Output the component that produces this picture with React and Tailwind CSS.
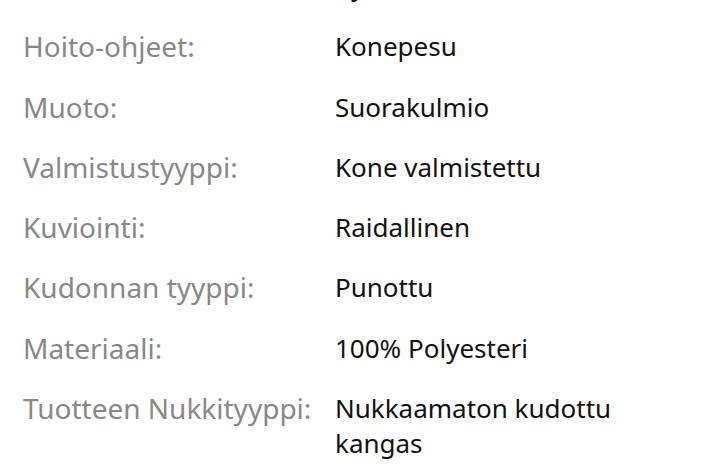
import React from 'react';

const rows = [
  ['Hoito-ohjeet:', 'Konepesu'],
  ['Muoto:', 'Suorakulmio'],
  ['Valmistustyyppi:', 'Kone valmistettu'],
  ['Kuviointi:', 'Raidallinen'],
  ['Kudonnan tyyppi:', 'Punottu'],
  ['Materiaali:', '100% Polyesteri'],
  ['Tuotteen Nukkityyppi:', 'Nukkaamaton kudottu kangas'],
];

export default function App() {
  return (
    <div className="w-[718px] h-[472px] overflow-hidden bg-white font-['Noto_Sans',sans-serif]">
      <div className="-mt-[31px] flex flex-col gap-[25.3px] pl-[23px] pr-[40px]">
        <div className="flex">
          <div className="w-[312px] shrink-0 text-[28px] leading-[35px] text-[#888888]">Koko:</div>
          <div className="text-[26px] leading-[35px] text-[#111111]">Ryhmä</div>
        </div>
        {rows.map(([label, value]) => (
          <div key={label} className="flex">
            <div className="w-[312px] shrink-0 text-[28px] leading-[35px] text-[#888888]">{label}</div>
            <div className="w-[300px] text-[26px] leading-[35px] text-[#111111]">{value}</div>
          </div>
        ))}
      </div>
    </div>
  );
}
